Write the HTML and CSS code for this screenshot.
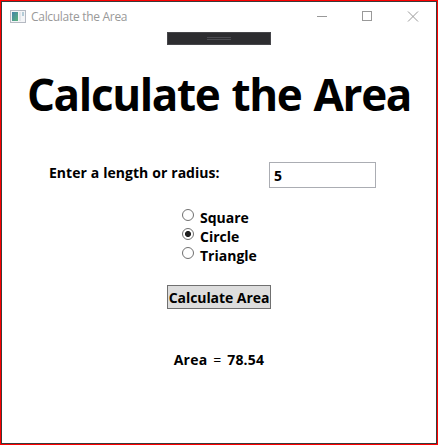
FILE: index.html
```html
<!DOCTYPE html>
<html lang="en">
<head>
<meta charset="utf-8">
<title>Calculate the Area</title>
<link rel="stylesheet" href="styles.css">
</head>
<body>
<div class="window">
  <header class="titlebar">
    <svg class="app-icon" width="16" height="14" viewBox="0 0 16 14" shape-rendering="crispEdges">
      <defs><linearGradient id="g" x1="0" y1="0" x2="1" y2="1"><stop offset="0" stop-color="#4382a8"/><stop offset="1" stop-color="#5bb47c"/></linearGradient></defs>
      <rect x=".5" y="1.500" width="15" height="12" fill="#f4f5f7" stroke="#b5b9c2"/>
      <rect x="2" y="3" width="6" height="9" fill="url(#g)"/>
      <rect x="9" y="3" width="2" height="9" fill="#e3e6ea"/>
      <rect x="12" y="3" width="2" height="4" fill="#b4ccd7"/>
    </svg>
    <span class="caption">Calculate the Area</span>
    <svg class="controls" width="106" height="12" viewBox="0 0 106 12" fill="none" stroke="#999">
      <path d="M1 5.500h10M46.500 .5h9v9h-9z" shape-rendering="crispEdges"/>
      <path d="M92 .5l10 10M102 .5l-10 10"/>
    </svg>
  </header>
  <div class="toolbar"><i></i></div>
  <h1>Calculate the Area</h1>
  <div class="field">
    <label for="size">Enter a length or radius:</label>
    <input id="size" type="text" value="5">
  </div>
  <div class="options">
    <label><input type="radio" name="shape"><span>Square</span></label>
    <label><input type="radio" name="shape" checked><span>Circle</span></label>
    <label><input type="radio" name="shape"><span>Triangle</span></label>
  </div>
  <button type="button">Calculate Area</button>
  <p class="result">Area <b>=</b> 78.54</p>
</div>
</body>
</html>
```
FILE: styles.css
```css
* { box-sizing: border-box; }
body { margin: 0; background: #f00; font: 700 14px/19px "Open Sans", "Noto Sans", sans-serif; color: #000; }
.window { width: 438px; height: 445px; border: 1px solid #f00; outline: 1px solid #3a3a3a; outline-offset: -2px; background: #fff; display: flex; flex-direction: column; align-items: center; }
.titlebar { width: 100%; height: 31px; padding: 8px 19px 0 9px; display: flex; align-items: flex-start; }
.app-icon { flex: none; }
.caption { font-weight: 400; font-size: 12px; line-height: 15px; color: #999; margin-left: 5px; letter-spacing: -.3px; white-space: nowrap; }
.controls { margin: 2px -4px 0 auto; }
.toolbar { flex: none; width: 104px; height: 13px; background: #2d2d30; border: 1px solid #46464a; padding: 4px 39px; }
.toolbar i { display: block; height: 3px; border: solid #4b4b50; border-width: 1px 0; }
h1 { margin: 17px 0 0; height: 66px; font-size: 44px; line-height: 64px; font-weight: 700; white-space: nowrap; letter-spacing: -1.35px; word-spacing: 2px; }
.field { width: 100%; margin-top: 34px; padding-left: 48px; display: flex; height: 26px; }
.field label { width: 220px; line-height: 22px; white-space: nowrap; letter-spacing: .02px; word-spacing: .3px; }
.field input { width: 107px; height: 26px; border: 1px solid #abadb3; border-radius: 0; padding: 1px 4px 0; font: inherit; outline: 0; }
.options { width: 76px; margin-top: 20px; padding-left: 1px; display: flex; flex-direction: column; }
.options label { display: flex; height: 19px; }
.options input { appearance: none; flex: none; width: 12px; height: 12px; margin: 1px 6px 0 0; border: 1px solid #707070; border-radius: 50%; background: #fff; }
.options input:checked { background: radial-gradient(circle, #212121 2.700px, #fff 3.300px); }
button { width: 104px; height: 24px; margin-top: 20px; padding: 0; border: 1px solid #707070; background: #ddd; font: inherit; color: #000; white-space: nowrap; letter-spacing: -.06px; }
.result { margin: 41px 0 0; word-spacing: 2px; letter-spacing: .2px; }
.result b { font-weight: 400; }
```
